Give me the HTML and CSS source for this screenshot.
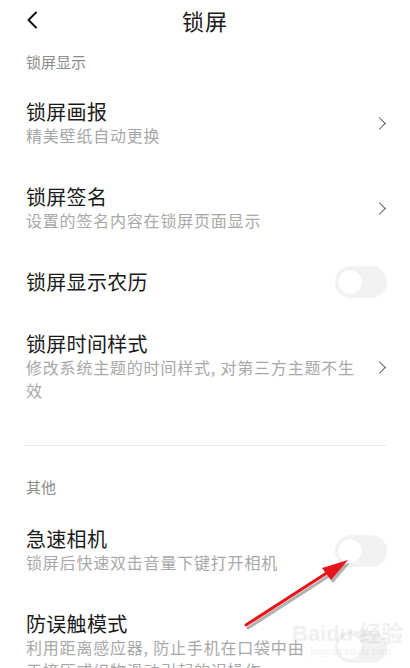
FILE: index.html
```html
<!DOCTYPE html>
<html lang="zh-CN">
<head>
  <meta charset="UTF-8" />
  <meta name="viewport" content="width=device-width, initial-scale=1.0"/>
  <title>锁屏</title>
  <link rel="stylesheet" href="styles.css">
</head>
<body>
  <div class="screen">
    <header class="topbar">
      <svg class="back" width="12" height="18" viewBox="0 0 12 18">
        <path d="M10 1.5 L2.5 9 L10 16.5" fill="none" stroke="#111" stroke-width="2" stroke-linecap="round" stroke-linejoin="round"/>
      </svg>
      <h1>锁屏</h1>
    </header>

    <div class="section-title first">锁屏显示</div>
    <div class="row">
      <div class="text">
        <div class="name">锁屏画报</div>
        <div class="desc">精美壁纸自动更换</div>
      </div>
      <span class="chevron"></span>
    </div>
    <div class="row">
      <div class="text">
        <div class="name">锁屏签名</div>
        <div class="desc">设置的签名内容在锁屏页面显示</div>
      </div>
      <span class="chevron"></span>
    </div>
    <div class="row">
      <div class="text">
        <div class="name">锁屏显示农历</div>
      </div>
      <span class="switch"></span>
    </div>
    <div class="row">
      <div class="text">
        <div class="name">锁屏时间样式</div>
        <div class="desc">修改系统主题的时间样式, 对第三方主题不生效</div>
      </div>
      <span class="chevron"></span>
    </div>

    <div class="divider"></div>

    <div class="section-title">其他</div>
    <div class="row">
      <div class="text">
        <div class="name">急速相机</div>
        <div class="desc">锁屏后快速双击音量下键打开相机</div>
      </div>
      <span class="switch"></span>
    </div>
    <div class="row">
      <div class="text">
        <div class="name">防误触模式</div>
        <div class="desc">利用距离感应器, 防止手机在口袋中由于挤压或织物滑动引起的误操作</div>
      </div>
      <span class="switch"></span>
    </div>

    <svg class="arrow" width="410" height="668" viewBox="0 0 410 668">
      <g transform="translate(2,3)" opacity="0.35">
        <path d="M246 625 L336 567" stroke="#222" stroke-width="3" stroke-linecap="round"/>
        <path d="M348 560 L322 568 L331 580 Z" fill="#222"/>
      </g>
      <path d="M246 625 L336 567" stroke="#e8141b" stroke-width="3" stroke-linecap="round"/>
      <path d="M348 560 L322 568 L331 580 Z" fill="#e8141b"/>
    </svg>

    <div class="watermark">
      <div class="wm-logo">Bai<span>du</span> 经验</div>
      <div class="wm-url">jingyan.baidu.com</div>
    </div>
  </div>
</body>
</html>
```

FILE: styles.css
```css
* {
  box-sizing: border-box;
}
body {
  margin: 0;
  background: #fff;
  font-family: "Noto Sans CJK SC", "Noto Sans", sans-serif;
  color: #1a1a1a;
}
.screen {
  position: relative;
  width: 410px;
  height: 668px;
  overflow: hidden;
}
/* barra superior */
.topbar {
  height: 40px;
  display: flex;
  align-items: center;
  justify-content: center;
  position: relative;
}
.topbar h1 {
  margin: 0;
  font-size: 22px;
  font-weight: 400;
  letter-spacing: 1px;
  line-height: 40px;
}
.back {
  position: absolute;
  left: 26px;
  top: 11px;
}
.section-title {
  padding: 31px 26px 11px;
  font-size: 15px;
  line-height: 20px;
  color: #8c8c8c;
}
.section-title.first {
  padding-top: 12px;
  padding-bottom: 9px;
}
.row {
  display: flex;
  align-items: center;
  padding: 19px 23px 19px 26px;
}
.text {
  flex: 1;
  min-width: 0;
  padding-right: 14px;
}
.name {
  font-size: 20px;
  line-height: 24px;
  letter-spacing: 0.3px;
}
.desc {
  font-size: 16px;
  line-height: 23px;
  color: #a8a8a8;
  letter-spacing: 0.8px;
}
.row:has(.switch) .text {
  padding-right: 26px;
}
.chevron {
  width: 9px;
  height: 9px;
  border-top: 1.6px solid #5a5a5a;
  border-right: 1.6px solid #5a5a5a;
  transform: rotate(45deg);
  margin-right: 3px;
  flex: none;
}
.switch {
  flex: none;
  width: 52px;
  height: 32px;
  margin: -4px 0;
  border-radius: 16px;
  background: #f2f2f2;
  position: relative;
}
.switch::after {
  content: "";
  position: absolute;
  left: 3px;
  top: 4px;
  width: 24px;
  height: 24px;
  border-radius: 50%;
  background: #fff;
  box-shadow: 0 0 1px rgba(0,0,0,0.08);
}
.divider {
  height: 1px;
  background: #ececec;
  margin: 24px 24px 0;
}
.arrow {
  position: absolute;
  left: 0;
  top: 0;
  pointer-events: none;
}
.watermark {
  position: absolute;
  left: 292px;
  top: 622px;
  color: rgba(160,160,160,0.18);
  font-family: "Liberation Sans", "Noto Sans CJK SC", sans-serif;
}
.wm-logo {
  font-size: 22px;
  font-weight: 700;
  line-height: 24px;
}
.wm-url {
  font-size: 10px;
  line-height: 12px;
  padding-left: 18px;
}
```
